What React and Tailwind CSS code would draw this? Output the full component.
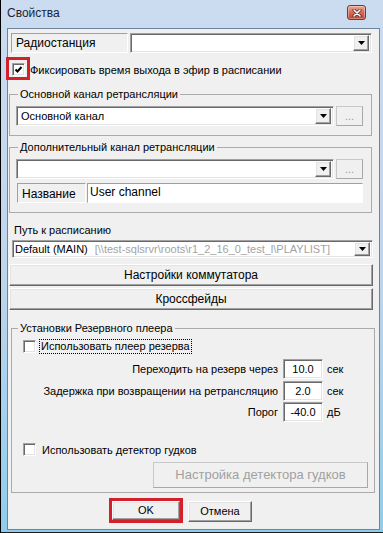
import React from 'react';

const sunken = 'border border-t-[#a0a0a0] border-l-[#a0a0a0] border-r-white border-b-white shadow-[inset_1px_1px_0_#696969,inset_-1px_-1px_0_#e3e3e3]';
const raised = 'border border-t-white border-l-white border-r-[#696969] border-b-[#696969] shadow-[inset_-1px_-1px_0_#a0a0a0,inset_1px_1px_0_#e3e3e3]';
const flatBox = 'border border-t-[#a0a0a0] border-l-[#a0a0a0] border-r-white border-b-white';

const DropArrow = ({ small }) => (
    <div className={`${small ? 'w-[16px] h-[14px]' : 'w-[16px] h-[16px]'} shrink-0 bg-[#f0f0f0] ${raised} flex items-center justify-center`}>
        <svg width="7" height="4" viewBox="0 0 7 4"><path d="M0 0h7L3.5 4z" fill="#000" /></svg>
    </div>
);

const Combo = ({ className = '', small, children }) => (
    <div className={`bg-white ${sunken} flex items-center justify-between pl-[4px] pr-[2px] ${className}`}>
        <div className="flex-1 min-w-0 whitespace-nowrap overflow-hidden leading-[14px]">{children}</div>
        <DropArrow small={small} />
    </div>
);

const DotsBtn = () => (
    <div className="w-[27px] h-[20px] ml-[2px] shrink-0 border border-[#c8c8c8] border-r-[#a8a8a8] border-b-[#a8a8a8] bg-[#f0f0f0] flex items-center justify-center text-[#9a9a9a] text-[11px] leading-none">
        ...
    </div>
);

const Check = ({ checked }) => (
    <div className={`w-[13px] h-[13px] shrink-0 bg-white ${sunken} flex items-center justify-center`}>
        {checked && (
            <svg width="9" height="9" viewBox="0 0 9 9">
                <path d="M1.5 4.5l2 2 4-4.5" stroke="#000" strokeWidth="2" fill="none" />
            </svg>
        )}
    </div>
);

const Edit = ({ children }) => (
    <div className={`w-[40px] h-[20px] ml-[5px] shrink-0 bg-white ${sunken} flex items-center justify-center leading-[14px] pb-[1px]`}>
        {children}
    </div>
);

const NumRow = ({ label, value, unit, className = '' }) => (
    <div className={`flex items-center ${className}`}>
        <div className="w-[260px] text-right leading-[14px]">{label}</div>
        <Edit>{value}</Edit>
        <div className="ml-[4px] leading-[14px]">{unit}</div>
    </div>
);

const CloseBtn = () => (
    <div className="w-[19px] h-[15px] mt-[5px] rounded-[3px] border border-[#7d3529] bg-gradient-to-b from-[#eaa898] via-[#d66a54] to-[#c0432c] flex items-center justify-center shadow-[inset_0_0_0_1px_rgba(255,255,255,0.35)]">
        <svg width="10" height="8" viewBox="0 0 10 8">
            <path d="M2 1l6 6M8 1L2 7" stroke="#5a2018" strokeWidth="3" strokeLinecap="round" />
            <path d="M2 1l6 6M8 1L2 7" stroke="#fff" strokeWidth="1.6" strokeLinecap="round" />
        </svg>
    </div>
);

export default function App() {
    return (
        <div className="w-[383px] h-[533px] flex flex-col border-l border-l-black border-b border-b-[#1b1b1b] bg-gradient-to-b from-[#cbdcf1] via-[#bfd5ee] to-[#8fcdec] font-['Liberation_Sans',Arial,sans-serif] text-[11px] text-black overflow-hidden">
            <div className="h-[28px] shrink-0 flex items-start justify-between pl-[6px] pr-[17px]">
                <span className="mt-[6px] text-[12px] leading-[15px] text-[#1b2533]">Свойства</span>
                <CloseBtn />
            </div>

            <div className="flex-1 ml-[6px] mr-[3px] mb-[2px] border border-[#6f849c] bg-[#f0f0f0] flex flex-col">
                <div className="flex mt-[4px] ml-[3px] gap-[2px]">
                    <div className={`w-[117px] h-[20px] ${flatBox} flex items-center pl-[4px] leading-[14px] text-[12px]`}>Радиостанция</div>
                    <Combo className="w-[242px] h-[20px]" />
                </div>

                <div className="flex items-center h-[13px] mt-[10px] ml-[4px]">
                    <div className="relative">
                        <Check checked />
                        <div className="absolute left-[-6px] top-[-6px] w-[24px] h-[23px] border-[3px] border-[#d3202b]" />
                    </div>
                    <span className="ml-[5px] leading-[14px]">Фиксировать время выхода в эфир в расписании</span>
                </div>

                <fieldset className="ml-[1px] mt-[11px] w-[363px] border border-[#aaaaaa] px-[6px] pb-[9px]">
                    <legend className="ml-[2px] px-[2px] leading-[14px]">Основной канал ретрансляции</legend>
                    <div className="flex mt-[5px]">
                        <Combo className="w-[318px] h-[20px]">Основной канал</Combo>
                        <DotsBtn />
                    </div>
                </fieldset>

                <fieldset className="ml-[1px] mt-[4px] w-[363px] border border-[#aaaaaa] px-[6px] pb-[9px]">
                    <legend className="ml-[2px] px-[2px] leading-[14px]">Дополнительный канал ретрансляции</legend>
                    <div className="flex mt-[5px]">
                        <Combo className="w-[318px] h-[20px]" />
                        <DotsBtn />
                    </div>
                    <div className="flex mt-[4px] ml-[1px]">
                        <div className={`w-[69px] h-[20px] ${flatBox} flex items-center pl-[4px] pt-[2px] leading-[14px] text-[12px]`}>Название</div>
                        <div className={`w-[276px] h-[20px] ml-[1px] bg-white ${flatBox} pl-[2px] pt-[1px] leading-[14px] text-[12px]`}>User channel</div>
                    </div>
                </fieldset>

                <div className="mt-[10px] ml-[6px] leading-[14px]">Путь к расписанию</div>
                <Combo className="w-[361px] h-[18px] mt-[3px] ml-[4px] !pl-[2px]" small>
                    Default (MAIN)<span className="ml-[7px] text-[#a3a3a3]">[\\test-sqlsrvr\roots\r1_2_16_0_test_l\PLAYLIST]</span>
                </Combo>

                <div className={`w-[364px] h-[22px] mt-[6px] ml-[1px] ${raised} flex items-center justify-center text-[12px]`}>Настройки коммутатора</div>
                <div className={`w-[364px] h-[22px] mt-[2px] ml-[1px] ${raised} flex items-center justify-center text-[12px]`}>Кроссфейды</div>

                <fieldset className="ml-[3px] mt-[11px] w-[362px] border border-[#aaaaaa] px-[6px] pb-[4px]">
                    <legend className="px-[2px] leading-[14px]">Установки Резервного плеера</legend>
                    <div className="flex items-center h-[13px] mt-[5px] ml-[5px]">
                        <Check />
                        <span className="ml-[4px] px-[1px] leading-[13px] outline-1 outline-dotted outline-black">Использовать плеер резерва</span>
                    </div>
                    <NumRow className="mt-[6px]" label="Переходить на резерв через" value="10.0" unit="сек" />
                    <NumRow className="mt-[2px]" label="Задержка при возвращении на ретрансляцию" value="2.0" unit="сек" />
                    <NumRow className="mt-[1px]" label="Порог" value="-40.0" unit="дБ" />
                    <div className="flex items-center h-[13px] mt-[21px] ml-[5px]">
                        <Check />
                        <span className="ml-[6px] leading-[14px]">Использовать детектор гудков</span>
                    </div>
                    <div className="w-[215px] h-[26px] mt-[6px] ml-[135px] border border-[#c8c8c8] border-r-[#a8a8a8] border-b-[#a8a8a8] flex items-center justify-center text-[13px] text-[#a0a0a0]">
                        Настройка детектора гудков
                    </div>
                </fieldset>

                <div className="flex items-start mt-[5px] ml-[101px]">
                    <div className="w-[74px] h-[25px] border-[3px] border-[#d3202b] flex">
                        <div className={`flex-1 ${raised} flex items-center justify-center`}>OK</div>
                    </div>
                    <div className={`w-[64px] h-[21px] mt-[3px] ml-[5px] ${raised} flex items-center justify-center`}>Отмена</div>
                </div>
            </div>
        </div>
    );
}
